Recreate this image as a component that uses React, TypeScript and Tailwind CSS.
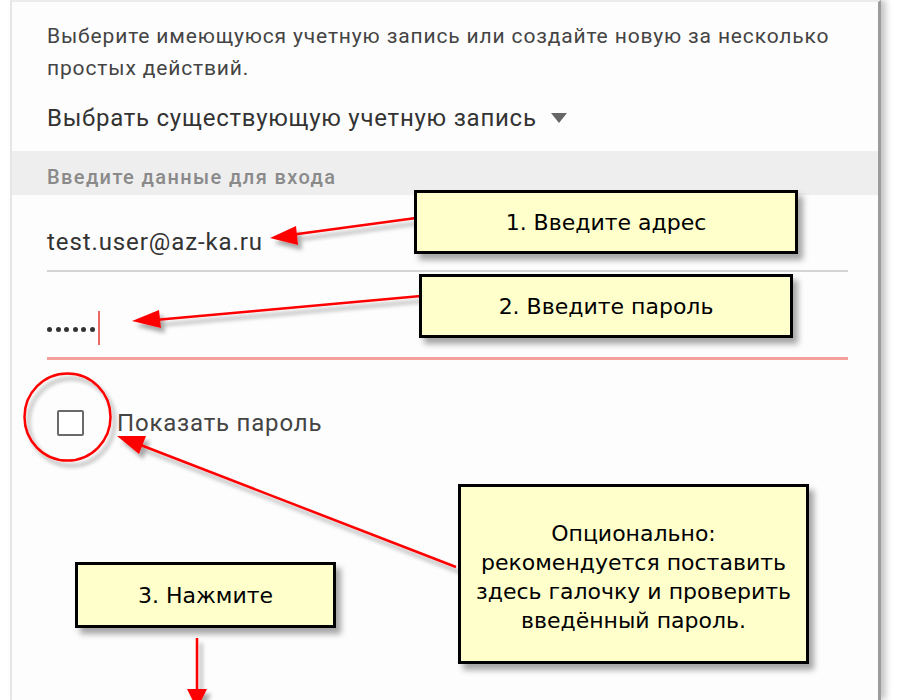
import React from 'react';

// Callout box used for the step hints
function Note({ className, children }: { className: string; children: React.ReactNode }) {
  return (
    <div
      className={`absolute flex items-center justify-center text-center bg-[#ffffcc] border-[3px] border-black text-black shadow-[5px_6px_6px_rgba(0,0,0,0.35)] ${className}`}
      style={{ fontFamily: '"DejaVu Sans", Verdana, sans-serif' }}
    >
      {children}
    </div>
  );
}

export default function App() {
  return (
    <div
      className="relative w-[900px] h-[700px] bg-white overflow-hidden"
      style={{ fontFamily: 'Roboto, "Noto Sans", sans-serif' }}
    >
      {/* Sign-in panel */}
      <div className="ml-[10px] w-[871px] h-full bg-[#fdfdfd] border-l-2 border-l-[#e6e6e6] border-t-2 border-t-[#ececec] border-r-[3px] border-r-[#9c9c9c] shadow-[5px_0_6px_rgba(0,0,0,0.22)]">
        <div className="pl-[35px] pr-[30px] pt-[18px]">
          <p className="text-[21px] leading-[32px] text-[#444] tracking-[0.85px] whitespace-nowrap">
            Выберите имеющуюся учетную запись или создайте новую за несколько
            <br />
            простых действий.
          </p>
          <div className="mt-[18px] flex items-center gap-[14px] text-[24px] leading-[32px] text-[#333] tracking-[0.75px]">
            <span>Выбрать существующую учетную запись</span>
            <svg width="16" height="10" viewBox="0 0 16 10">
              <path d="M0 0 L16 0 L8 10 Z" fill="#666" />
            </svg>
          </div>
        </div>

        <div className="mt-[17px] h-[44px] bg-[#eeeeee] pl-[35px] pt-[14px] text-[20px] leading-[24px] text-[#8a8a8a] font-medium tracking-[1.4px]">
          Введите данные для входа
        </div>

        <div className="pl-[35px] pr-[30px]">
          <div className="h-[77px] pt-[31px] border-b-2 border-b-[#d4d4d4] text-[24px] leading-[32px] text-[#333] tracking-[0.9px]">
            test.user@az-ka.ru
          </div>
          <div className="h-[88px] pt-[39px] border-b-[3px] border-b-[#f4a19b] flex items-start">
            <div className="flex items-center gap-[3.5px] mt-[16px]">
              {[0, 1, 2, 3, 4, 5].map((i) => (
                <span key={i} className="w-[5px] h-[5px] rounded-full bg-[#333]" />
              ))}
            </div>
            <span className="ml-[3px] w-[2px] h-[34px] bg-[#ea6a62]" />
          </div>
          <div className="mt-[47px] flex items-center">
            <span className="ml-[10px] w-[27px] h-[26px] border-2 border-[#6a6a6a] rounded-[2px] bg-white" />
            <span className="ml-[33px] text-[24px] leading-[32px] text-[#444] tracking-[0.8px]">
              Показать пароль
            </span>
          </div>
        </div>
      </div>

      {/* Annotations: arrows and the ring around the checkbox */}
      <svg className="absolute inset-0" width="900" height="700" viewBox="0 0 900 700">
        <defs>
          <filter id="drop" x="-20%" y="-20%" width="140%" height="140%">
            <feGaussianBlur in="SourceAlpha" stdDeviation="2" />
            <feOffset dx="4" dy="5" result="b" />
            <feComponentTransfer>
              <feFuncA type="linear" slope="0.35" />
            </feComponentTransfer>
            <feMerge>
              <feMergeNode />
              <feMergeNode in="SourceGraphic" />
            </feMerge>
          </filter>
        </defs>
        <g filter="url(#drop)" fill="#ff0000" stroke="#ff0000">
          <line x1="416" y1="218" x2="290" y2="235" strokeWidth="2.5" />
          <path d="M270 238 L296 226 L298 245 Z" stroke="none" />

          <line x1="421" y1="296" x2="155" y2="320" strokeWidth="2.5" />
          <path d="M132 321 L159 310 L161 328 Z" stroke="none" />

          <line x1="456" y1="567" x2="138" y2="444" strokeWidth="2.5" />
          <path d="M117 436 L146 436 L139 454 Z" stroke="none" />

          <line x1="197" y1="638" x2="197" y2="692" strokeWidth="2.5" />
          <path d="M187 689 L207 689 L197 709 Z" stroke="none" />

          <ellipse cx="67.5" cy="417" rx="43" ry="43.5" fill="none" strokeWidth="2.5" />
        </g>
      </svg>

      <Note className="left-[414px] top-[190px] w-[384px] h-[64px] text-[22px]">1. Введите адрес</Note>
      <Note className="left-[419px] top-[274px] w-[374px] h-[64px] text-[22px]">2. Введите пароль</Note>
      <Note className="left-[458px] top-[484px] w-[351px] h-[180px] text-[22px] leading-[29px] pt-[6px]">
        <span>
          Опционально:
          <br />
          рекомендуется поставить
          <br />
          здесь галочку и проверить
          <br />
          введённый пароль.
        </span>
      </Note>
      <Note className="left-[75px] top-[562px] w-[261px] h-[66px] text-[22px]">3. Нажмите</Note>
    </div>
  );
}
